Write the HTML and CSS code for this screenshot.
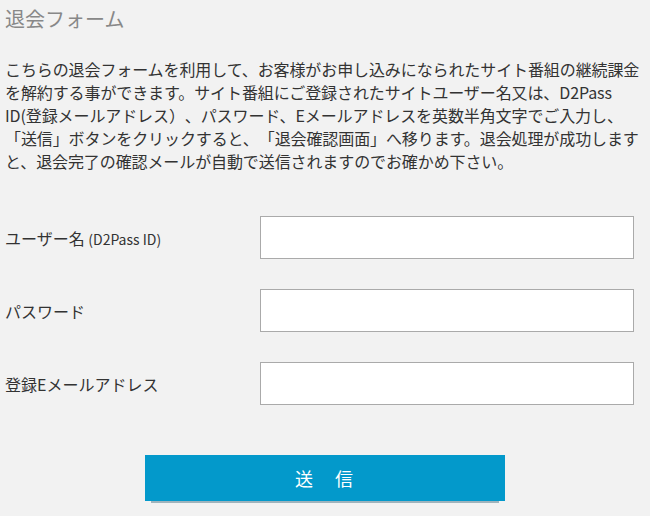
FILE: index.html
```html
<!DOCTYPE html>
<html lang="ja">
<head>
    <meta charset="UTF-8">
    <meta name="viewport" content="width=device-width, initial-scale=1.0">
    <title>退会フォーム</title>
    <link rel="stylesheet" href="styles.css">
</head>
<body>
    <div class="container">
        <h1 class="title">退会フォーム</h1>
        <p class="lead">
            こちらの退会フォームを利用して、お客様がお申し込みになられたサイト番組の継続課金<br>を解約する事ができます。サイト番組にご登録されたサイトユーザー名又は、D2Pass<br>ID(登録メールアドレス）、パスワード、Eメールアドレスを英数半角文字でご入力し、<br>「送信」ボタンをクリックすると、「退会確認画面」へ移ります。退会処理が成功します<br>と、退会完了の確認メールが自動で送信されますのでお確かめ下さい。
        </p>
        <form class="form" id="withdrawForm">
            <div class="row">
                <label for="username">ユーザー名 <span class="small">(D2Pass ID)</span></label>
                <input type="text" id="username" name="username">
            </div>
            <div class="row">
                <label for="password">パスワード</label>
                <input type="password" id="password" name="password">
            </div>
            <div class="row">
                <label for="email">登録Eメールアドレス</label>
                <input type="email" id="email" name="email">
            </div>
            <button type="submit" class="submit">送　信</button>
        </form>
    </div>
</body>
</html>
```

FILE: styles.css
```css
body {
    margin: 0;
    background-color: #f2f2f2;
    font-family: "Noto Sans CJK JP", "Noto Sans", sans-serif;
    color: #333;
    text-spacing-trim: space-all;
}
.container {
    padding: 5px;
}
.title {
    margin: 0;
    font-size: 20px;
    font-weight: normal;
    line-height: 28px;
    color: #888;
}
.lead {
    margin: 25px 0 0;
    font-size: 16px;
    line-height: 23px;
    letter-spacing: -0.1px;
}
.form {
    margin-top: 43px;
}
.row {
    display: flex;
    align-items: center;
    margin-bottom: 30px;
}
.row label {
    width: 255px;
    font-size: 16px;
}
.small {
    font-size: 14px;
}
.row input {
    box-sizing: border-box;
    width: 374px;
    height: 43px;
    border: 1px solid #aaa;
    background-color: #fff;
    font-size: 16px;
    padding: 0 8px;
}
.submit {
    display: block;
    margin: 50px 0 0 140px;
    width: 360px;
    height: 46px;
    border: none;
    background-color: #0399cb;
    color: #fff;
    font-family: inherit;
    font-size: 18px;
    letter-spacing: 2px;
    cursor: pointer;
    box-shadow: 0 8px 0 -6px #9fb4bd;
}
```
